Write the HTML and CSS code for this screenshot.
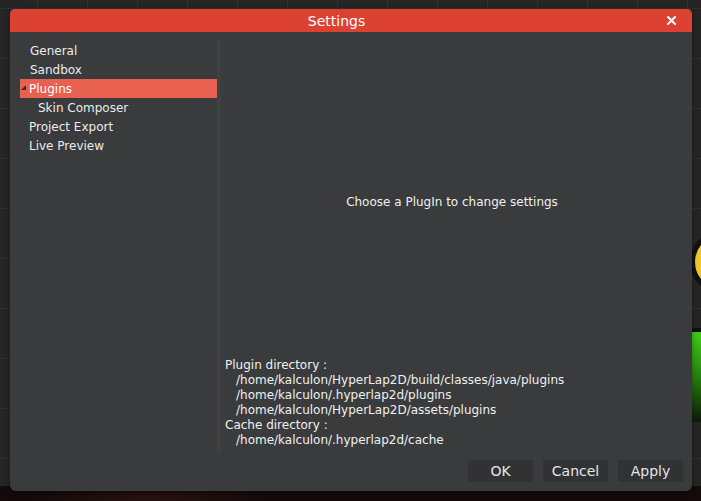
FILE: index.html
```html
<!DOCTYPE html>
<html>
<head>
<meta charset="utf-8">
<link rel="stylesheet" href="styles.css">
</head>
<body>
<div class="desktop">
  <div class="grid"></div>
  <div class="bottom-glow"></div>
  <div class="orb"></div>
  <div class="greenbar"></div>

  <div class="dialog">
    <div class="titlebar">
      <span class="title">Settings</span>
      <svg class="close" width="9" height="9" viewBox="0 0 9 9"><path d="M1 1 L8 8 M8 1 L1 8" stroke="#ffffff" stroke-width="2" stroke-linecap="square"/></svg>
    </div>
    <div class="body">
      <div class="main">
        <ul class="tree">
          <li class="item nudge">General</li>
          <li class="item nudge">Sandbox</li>
          <li class="item selected"><svg class="arrow" width="5" height="5" viewBox="0 0 5 5"><path d="M5 0 L5 5 L0 5 Z" fill="#3a2a28"/></svg>Plugins</li>
          <li class="item child">Skin Composer</li>
          <li class="item">Project Export</li>
          <li class="item">Live Preview</li>
        </ul>
        <div class="splitter"></div>
        <div class="content">
          <div class="placeholder">Choose a PlugIn to change settings</div>
          <div class="dirs">
            <div class="line">Plugin directory :</div>
            <div class="line path">/home/kalculon/HyperLap2D/build/classes/java/plugins</div>
            <div class="line path">/home/kalculon/.hyperlap2d/plugins</div>
            <div class="line path">/home/kalculon/HyperLap2D/assets/plugins</div>
            <div class="line">Cache directory :</div>
            <div class="line path">/home/kalculon/.hyperlap2d/cache</div>
          </div>
        </div>
      </div>
      <div class="buttons">
        <button class="btn">OK</button>
        <button class="btn">Cancel</button>
        <button class="btn">Apply</button>
      </div>
    </div>
  </div>
</div>
</body>
</html>
```

FILE: styles.css
```css
html, body {
  margin: 0;
  padding: 0;
}
body {
  width: 701px;
  height: 501px;
  overflow: hidden;
  background: #252525;
  font-family: "DejaVu Sans", sans-serif;
}
.desktop {
  position: relative;
  width: 701px;
  height: 501px;
  overflow: hidden;
}
.grid {
  position: absolute;
  inset: 0;
  background-image:
    linear-gradient(to right, #303030 1px, transparent 1px),
    linear-gradient(to bottom, #303030 1px, transparent 1px);
  background-size: 50px 50px;
  background-position: 37px 8px;
}
.bottom-glow {
  position: absolute;
  left: 0;
  right: 0;
  top: 486px;
  bottom: 0;
  background: radial-gradient(ellipse 120px 30px at 150px 20px, #2a1512, #150a0a);
}
.orb {
  position: absolute;
  left: 690px;
  top: 230px;
  width: 54px;
  height: 54px;
  border-radius: 50%;
  background: #f2c52a;
  border: 5px solid #111;
}
.greenbar {
  position: absolute;
  left: 680px;
  top: 328px;
  width: 40px;
  height: 90px;
  border-top: 4px solid #111;
  background: linear-gradient(to bottom, #3ed018 0%, #2a8a10 45%, #0e1a08 100%);
}
.dialog {
  position: absolute;
  left: 10px;
  top: 9px;
  width: 682px;
  height: 482px;
  display: flex;
  flex-direction: column;
  background: #3a3b3d;
  border-radius: 5px 5px 6px 6px;
  box-shadow: 0 2px 6px rgba(0,0,0,0.35);
  overflow: hidden;
}
.titlebar {
  height: 23px;
  flex: none;
  background: #dd4132;
  display: flex;
  align-items: center;
  justify-content: center;
  position: relative;
  color: #ffffff;
  font-size: 14px;
  padding-right: 29px;
}
.title {
  margin-top: 1px;
}
.close {
  position: absolute;
  right: 16px;
  top: 7px;
}
.body {
  flex: 1;
  display: flex;
  flex-direction: column;
  padding: 8px 9px 9px 10px;
  min-height: 0;
}
.main {
  flex: 1;
  display: flex;
  min-height: 0;
}
.tree {
  list-style: none;
  margin: 1px 0 0 0;
  padding: 0;
  width: 197px;
  flex: none;
}
.item {
  height: 19px;
  line-height: 21px;
  font-size: 12px;
  color: #ececec;
  padding-left: 9px;
  position: relative;
  white-space: nowrap;
  overflow: visible;
}
.item.nudge {
  padding-left: 10px;
}
.item.child {
  padding-left: 18px;
}
.item.selected {
  background: #e8604f;
  color: #ffffff;
}
.arrow {
  position: absolute;
  left: 1px;
  top: 6px;
}
.splitter {
  width: 4px;
  flex: none;
  background: #3f4042;
}
.content {
  flex: 1;
  display: flex;
  flex-direction: column;
  min-width: 0;
}
.placeholder {
  flex: 1;
  display: flex;
  align-items: center;
  justify-content: center;
  font-size: 12px;
  color: #f0f0f0;
  padding-top: 5px;
}
.dirs {
  padding: 0 0 4px 4px;
  font-size: 12px;
  color: #f0f0f0;
}
.line {
  height: 15px;
  line-height: 15px;
  white-space: nowrap;
}
.line.path {
  padding-left: 11px;
}
.buttons {
  flex: none;
  display: flex;
  justify-content: flex-end;
  gap: 10px;
  margin-top: 8px;
}
.btn {
  width: 65px;
  height: 22px;
  border: none;
  border-radius: 0;
  background: #313234;
  color: #e6e6e6;
  font-family: "DejaVu Sans", sans-serif;
  font-size: 14px;
  padding: 0;
}
```
